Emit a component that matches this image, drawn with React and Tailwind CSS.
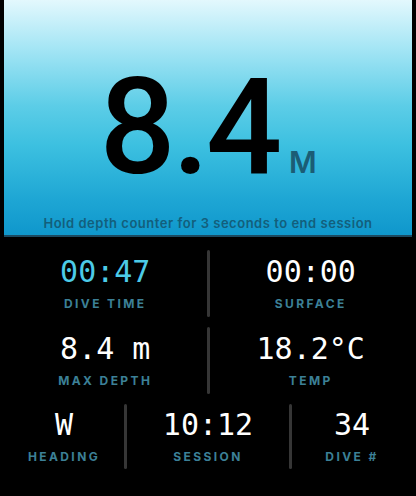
import React from "react";

const mono = { fontFamily: '"DejaVu Sans Mono", "Liberation Mono", monospace' };

const Stat = ({ value, label, accent }) => (
  <div className="flex-1 flex flex-col items-center justify-center">
    <div
      className={`text-[30px] leading-none ${accent ? "text-[#4ccbe8]" : "text-white"}`}
      style={mono}
    >
      {value}
    </div>
    <div className="mt-[11px] text-[12px] leading-none font-bold tracking-[0.2em] text-[#3c8097] font-['Inter',sans-serif]">
      {label}
    </div>
  </div>
);

const Divider = () => <div className="w-[3px] self-stretch rounded-full bg-[#363636]" />;

export default function App() {
  return (
    <div className="w-[416px] h-[496px] bg-black px-1 overflow-hidden">
      {/* depth panel */}
      <div className="h-[237px] border-b-2 border-[#1b4a61] bg-[linear-gradient(to_bottom,#e3f8fd_0%,#a6e6f5_20%,#5ccde7_45%,#3cc0e0_62%,#1ea6d4_85%,#0f97cc_100%)] flex flex-col items-center">
        <div className="flex-1 flex items-end justify-center pb-[22px]">
          <div className="flex items-baseline">
            <span className="text-[134px] leading-none font-medium tracking-[-0.025em] text-black font-['Roboto',sans-serif]">
              8.4
            </span>
            <span className="ml-[10px] text-[30px] leading-none font-semibold text-[#1b5d75] font-['Inter',sans-serif]">
              M
            </span>
          </div>
        </div>
        <div className="pb-[5px] text-[13px] leading-none font-semibold tracking-[0.04em] text-[#135f7c] font-['Inter',sans-serif]">
          Hold depth counter for 3 seconds to end session
        </div>
      </div>

      {/* stats */}
      <div className="pt-[13px] flex flex-col gap-[10px]">
        <div className="h-[67px] flex">
          <Stat value="00:47" label="DIVE TIME" accent />
          <Divider />
          <Stat value="00:00" label="SURFACE" />
        </div>
        <div className="h-[67px] flex">
          <Stat value="8.4 m" label="MAX DEPTH" />
          <Divider />
          <Stat value="18.2°C" label="TEMP" />
        </div>
        <div className="h-[65px] flex">
          <div className="w-[120px] flex">
            <Stat value="W" label="HEADING" />
          </div>
          <Divider />
          <Stat value="10:12" label="SESSION" />
          <Divider />
          <div className="w-[120px] flex">
            <Stat value="34" label="DIVE #" />
          </div>
        </div>
      </div>
    </div>
  );
}
